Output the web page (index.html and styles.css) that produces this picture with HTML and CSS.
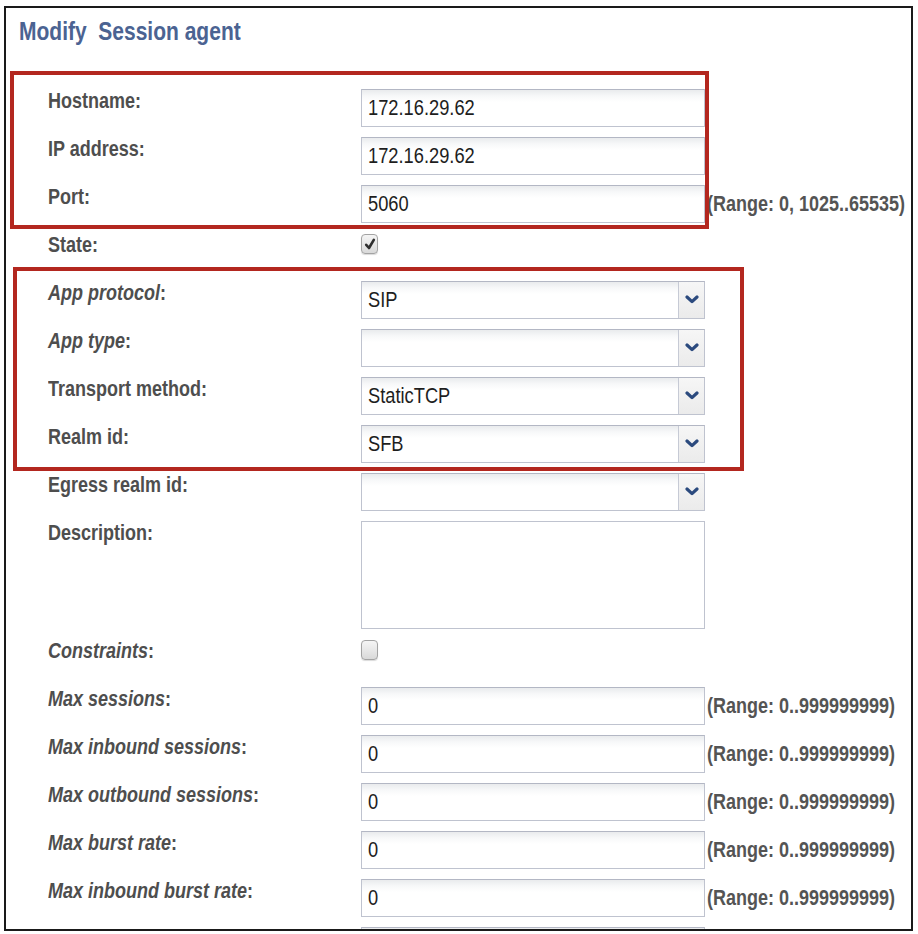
FILE: index.html
```html
<!DOCTYPE html>
<html lang="en">
<head>
<meta charset="utf-8">
<title>Modify Session agent</title>
<link rel="stylesheet" href="styles.css">
</head>
<body>
<div class="frame">
  <h1 class="title"><span class="tall">Modify&nbsp; Session agent</span></h1>
  <div class="form">
    <div class="row">
      <div class="label"><span class="tall">Hostname:</span></div>
      <div class="field"><span class="tall">172.16.29.62</span></div>
    </div>
    <div class="row">
      <div class="label"><span class="tall">IP address:</span></div>
      <div class="field"><span class="tall">172.16.29.62</span></div>
    </div>
    <div class="row">
      <div class="label"><span class="tall">Port:</span></div>
      <div class="field"><span class="tall">5060</span></div>
      <div class="range"><span class="tall">(Range: 0, 1025..65535)</span></div>
    </div>
    <div class="row">
      <div class="label"><span class="tall">State:</span></div>
      <div class="check-cell"><span class="checkbox checked"><svg viewBox="0 0 12 14" width="12" height="14"><path d="M2.2 7.8 L5 11 L9.8 2.8" fill="none" stroke="#2e2e2e" stroke-width="2.6" stroke-linecap="round" stroke-linejoin="round"/></svg></span></div>
    </div>
    <div class="row">
      <div class="label"><span class="tall"><i>App protocol</i>:</span></div>
      <div class="field select"><span class="tall">SIP</span><span class="btn"><svg viewBox="0 0 14 9" width="14" height="9"><path d="M2 2 L7 6.6 L12 2" fill="none" stroke="#2b4a7e" stroke-width="3.2" stroke-linecap="round" stroke-linejoin="round"/></svg></span></div>
    </div>
    <div class="row">
      <div class="label"><span class="tall"><i>App type</i>:</span></div>
      <div class="field select"><span class="tall"></span><span class="btn"><svg viewBox="0 0 14 9" width="14" height="9"><path d="M2 2 L7 6.6 L12 2" fill="none" stroke="#2b4a7e" stroke-width="3.2" stroke-linecap="round" stroke-linejoin="round"/></svg></span></div>
    </div>
    <div class="row">
      <div class="label"><span class="tall">Transport method:</span></div>
      <div class="field select"><span class="tall">StaticTCP</span><span class="btn"><svg viewBox="0 0 14 9" width="14" height="9"><path d="M2 2 L7 6.6 L12 2" fill="none" stroke="#2b4a7e" stroke-width="3.2" stroke-linecap="round" stroke-linejoin="round"/></svg></span></div>
    </div>
    <div class="row">
      <div class="label"><span class="tall">Realm id:</span></div>
      <div class="field select"><span class="tall">SFB</span><span class="btn"><svg viewBox="0 0 14 9" width="14" height="9"><path d="M2 2 L7 6.6 L12 2" fill="none" stroke="#2b4a7e" stroke-width="3.2" stroke-linecap="round" stroke-linejoin="round"/></svg></span></div>
    </div>
    <div class="row">
      <div class="label"><span class="tall">Egress realm id:</span></div>
      <div class="field select"><span class="tall"></span><span class="btn"><svg viewBox="0 0 14 9" width="14" height="9"><path d="M2 2 L7 6.6 L12 2" fill="none" stroke="#2b4a7e" stroke-width="3.2" stroke-linecap="round" stroke-linejoin="round"/></svg></span></div>
    </div>
    <div class="row row-tall">
      <div class="label"><span class="tall">Description:</span></div>
      <div class="textarea"></div>
    </div>
    <div class="row">
      <div class="label"><span class="tall"><i>Constraints</i>:</span></div>
      <div class="check-cell"><span class="checkbox"></span></div>
    </div>
    <div class="row">
      <div class="label"><span class="tall"><i>Max sessions</i>:</span></div>
      <div class="field"><span class="tall">0</span></div>
      <div class="range"><span class="tall">(Range: 0..999999999)</span></div>
    </div>
    <div class="row">
      <div class="label"><span class="tall"><i>Max inbound sessions</i>:</span></div>
      <div class="field"><span class="tall">0</span></div>
      <div class="range"><span class="tall">(Range: 0..999999999)</span></div>
    </div>
    <div class="row">
      <div class="label"><span class="tall"><i>Max outbound sessions</i>:</span></div>
      <div class="field"><span class="tall">0</span></div>
      <div class="range"><span class="tall">(Range: 0..999999999)</span></div>
    </div>
    <div class="row">
      <div class="label"><span class="tall"><i>Max burst rate</i>:</span></div>
      <div class="field"><span class="tall">0</span></div>
      <div class="range"><span class="tall">(Range: 0..999999999)</span></div>
    </div>
    <div class="row">
      <div class="label"><span class="tall"><i>Max inbound burst rate</i>:</span></div>
      <div class="field"><span class="tall">0</span></div>
      <div class="range"><span class="tall">(Range: 0..999999999)</span></div>
    </div>
    <div class="row">
      <div class="label"></div>
      <div class="field"><span class="tall"></span></div>
    </div>
  </div>
  <div class="mark mark-1"></div>
  <div class="mark mark-2"></div>
</div>
</body>
</html>
```

FILE: styles.css
```css
* { box-sizing: border-box; }

html, body {
  margin: 0;
  padding: 0;
  background: #ffffff;
}

body {
  font-family: "Liberation Sans", Arial, sans-serif;
  width: 918px;
  height: 934px;
  overflow: hidden;
}

.frame {
  position: relative;
  margin: 6px 0 0 4px;
  width: 909px;
  height: 925px;
  border: 2px solid #1a1a1a;
  overflow: hidden;
  background: #fff;
}

.tall {
  display: inline-block;
  transform: scaleY(1.22);
  transform-origin: 50% 50%;
  white-space: nowrap;
}

.title {
  margin: 11px 0 0 13px;
  height: 24px;
  font-size: 21px;
  line-height: 24px;
  font-weight: bold;
  color: #4b6392;
}

.form {
  margin-top: 46px;
  padding-left: 42px;
}

.row {
  display: grid;
  grid-template-columns: 313px 344px auto;
  height: 38px;
  margin-bottom: 10px;
}

.row-tall {
  height: 108px;
}

.label {
  padding-top: 1px;
  font-size: 18px;
  line-height: 22px;
  font-weight: bold;
  color: #4e4e4e;
}

.label i {
  font-style: italic;
}

.field {
  display: flex;
  align-items: center;
  height: 38px;
  padding-left: 6px;
  border: 1px solid #bfc3cf;
  border-top-color: #b3b7c4;
  background: linear-gradient(#e9ebed 0, #f7f8f9 6px, #ffffff 12px);
  font-size: 18.3px;
  line-height: 22px;
  color: #1e1e1e;
  position: relative;
}

.field.select {
  padding-right: 26px;
}

.btn {
  position: absolute;
  top: 0;
  right: 0;
  bottom: 0;
  width: 26px;
  border-left: 1px solid #c6cad5;
  background: linear-gradient(#f6f6f6, #ebebeb);
  display: flex;
  align-items: center;
  justify-content: center;
}

.btn svg {
  display: block;
  margin-top: -2px;
}

.textarea {
  height: 108px;
  border: 1px solid #bfc3cf;
  background: #fff;
}

.range {
  display: flex;
  align-items: center;
  padding-left: 2px;
  font-size: 18px;
  line-height: 22px;
  font-weight: bold;
  color: #545454;
}

.check-cell {
  padding-top: 1px;
}

.checkbox {
  display: flex;
  align-items: center;
  justify-content: center;
  width: 17px;
  height: 20px;
  border: 1px solid #a3a3a3;
  border-radius: 4px;
  background: linear-gradient(#f5f5f5, #d9d9d9);
  box-shadow: 0 1px 1px rgba(0, 0, 0, 0.15);
}

.mark {
  position: absolute;
  border: 4px solid #b3271f;
  pointer-events: none;
}

.mark-1 {
  left: 4px;
  top: 63px;
  width: 699px;
  height: 158px;
}

.mark-2 {
  left: 7px;
  top: 259px;
  width: 731px;
  height: 204px;
}
```
